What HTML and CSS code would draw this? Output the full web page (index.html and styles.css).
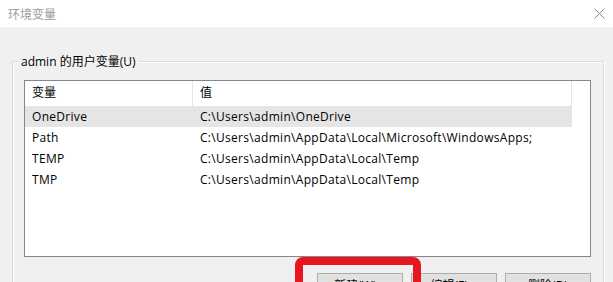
FILE: index.html
```html
<!DOCTYPE html>
<html>
<head>
    <meta charset="utf-8">
    <title>环境变量</title>
    <link rel="stylesheet" href="styles.css">
</head>
<body>
    <div id="env_dialog">

        <div class="titlebar">
            <span class="title">环境变量</span>
            <svg class="close" width="11" height="11" viewBox="0 0 11 11">
                <path d="M0.5 0.5 L10.5 10.5 M10.5 0.5 L0.5 10.5" stroke="#8a8a8a" stroke-width="1" fill="none" />
            </svg>
        </div>

        <div class="dialog_body">
            <fieldset class="group">
                <legend>admin 的用户变量(U)</legend>

                <div class="listview">
                    <div class="row header">
                        <div class="col name">变量</div>
                        <div class="col value">值</div>
                    </div>
                    <div class="row selected">
                        <div class="col name">OneDrive</div>
                        <div class="col value">C:\Users\admin\OneDrive</div>
                    </div>
                    <div class="row">
                        <div class="col name">Path</div>
                        <div class="col value">C:\Users\admin\AppData\Local\Microsoft\WindowsApps;</div>
                    </div>
                    <div class="row">
                        <div class="col name">TEMP</div>
                        <div class="col value">C:\Users\admin\AppData\Local\Temp</div>
                    </div>
                    <div class="row">
                        <div class="col name">TMP</div>
                        <div class="col value">C:\Users\admin\AppData\Local\Temp</div>
                    </div>
                </div>

                <div class="buttons">
                    <button class="btn">新建(W)...</button>
                    <button class="btn">编辑(E)...</button>
                    <button class="btn">删除(D)</button>
                </div>
            </fieldset>

            <!-- highlight box drawn over the "new" button -->
            <div class="mark"></div>
        </div>
    </div>
</body>
</html>
```

FILE: styles.css
```css
html, body {
    margin:0;
    padding:0;
}

body {
    width:613px;
    height:282px;
    overflow:hidden;
    background:#f0f0f0;
    font-family:"Open Sans", "Noto Sans CJK SC", sans-serif;
    font-size:12px;
    color:#000;
}

#env_dialog {
    width:613px;
    height:282px;
    display:flex;
    flex-direction:column;
}

.titlebar {
    height:27px;
    flex:none;
    display:flex;
    align-items:center;
    justify-content:space-between;
    background:#fff;
    padding:0 8px 0 8px;
}

    .titlebar .title {
        color:#9a9a9a;
        font-family:"Noto Sans CJK SC", sans-serif;
        font-size:12px;
        line-height:14px;
    }

    .titlebar .close {
        display:block;
    }

.dialog_body {
    position:relative;
    flex:1;
    padding-top:26px;
}

.group {
    margin:0 9px 0 12px;
    padding:0 12px 0 11px;
    border:1px solid #dadada;
    box-shadow:inset 1px 1px 0 #fff, 1px 1px 0 #fff;
    min-width:0;
}

    .group legend {
        margin-left:-6px;
        padding:0 3px;
        line-height:17px;
        color:#000;
    }

.listview {
    margin-top:10px;
    height:175px;
    border:1px solid #828790;
    background:#fff;
}

    .listview .row {
        display:flex;
        height:21px;
        line-height:21px;
        width:547px;
        white-space:nowrap;
        letter-spacing:0.3px;
    }

    .listview .header {
        height:25px;
        line-height:24px;
        letter-spacing:0;
    }

        .listview .header .col {
            border-right:1px solid #e5e5e5;
        }

    .listview .selected {
        background:#e5e5e5;
    }

    .listview .col {
        box-sizing:border-box;
        padding-left:7px;
        overflow:hidden;
    }

    .listview .name {
        width:168px;
    }

    .listview .value {
        width:379px;
    }

.buttons {
    display:flex;
    justify-content:flex-end;
    gap:8px;
    margin-top:16px;
}

.btn {
    width:86px;
    height:24px;
    padding:0;
    border:1px solid #adadad;
    background:#e1e1e1;
    font-family:inherit;
    font-size:12px;
    color:#000;
}

.mark {
    position:absolute;
    left:295px;
    top:230px;
    width:110px;
    height:40px;
    border:8px solid #e8161f;
    border-radius:8px;
}
```
